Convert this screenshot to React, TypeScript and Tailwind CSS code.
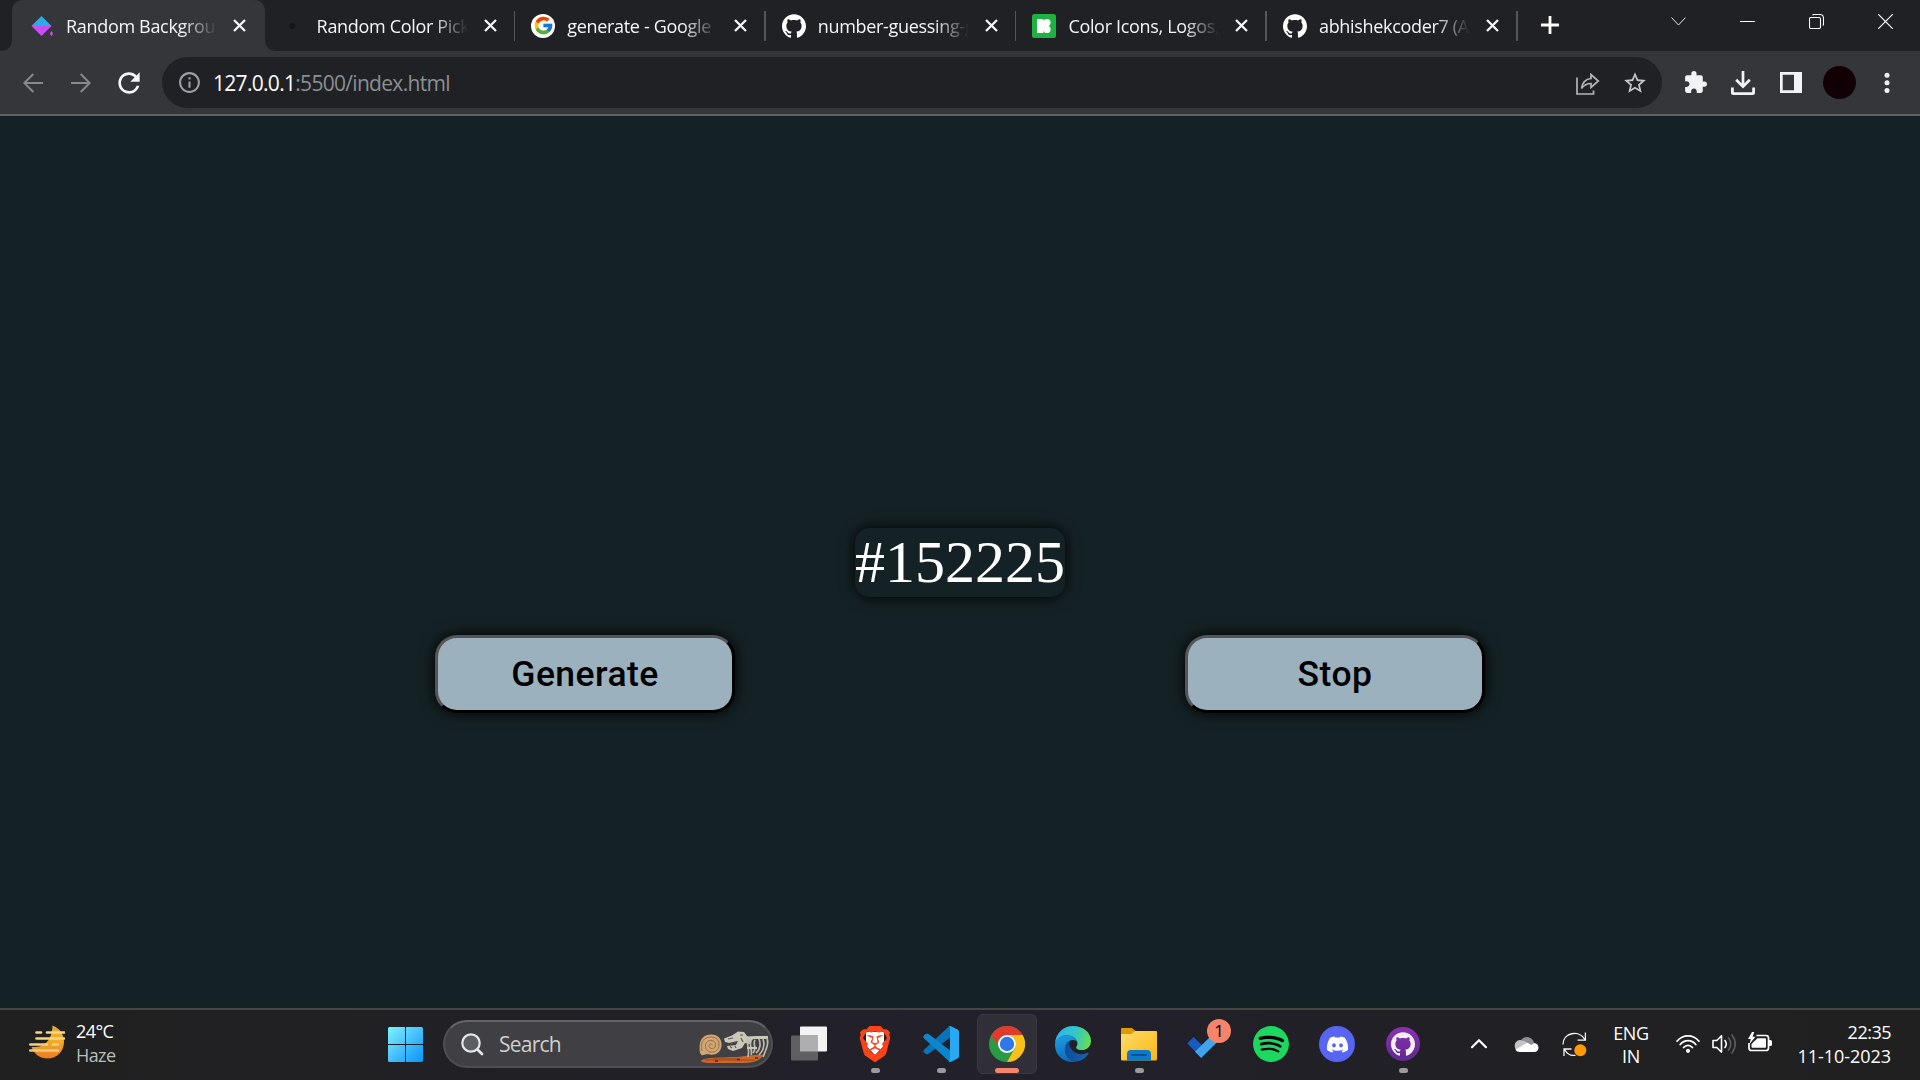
import React from "react";
import { FcGoogle } from "react-icons/fc";
import { FaDiscord } from "react-icons/fa";
import { SiBrave, SiGithub, SiSpotify } from "react-icons/si";
import { MdExtension, MdInfoOutline, MdRefresh, MdStarBorder } from "react-icons/md";

const uiFont = "font-['Open_Sans','Noto_Sans',sans-serif]";

function DropIcon() {
  return (
    <svg width="24" height="24" viewBox="0 0 24 24">
      <path d="M11.5 2 L21.5 12 H1.5 Z" fill="#27aee8" />
      <path d="M1.5 12 H21.5 L11.5 22 Z" fill="#c94df0" />
      <path d="M21.5 17.5 q2 2.4 0 4 q-2 -1.6 0 -4" fill="#c94df0" stroke="#c94df0" />
    </svg>
  );
}

function DotIcon() {
  return (
    <svg width="24" height="24" viewBox="0 0 24 24">
      <circle cx="11.5" cy="12" r="3" fill="#151617" />
    </svg>
  );
}

function GoogleIcon() {
  return (
    <span className="flex size-6 items-center justify-center rounded-full bg-white">
      <FcGoogle size={21} />
    </span>
  );
}

function Icons8Icon() {
  return (
    <svg width="24" height="24" viewBox="0 0 24 24">
      <rect width="24" height="24" rx="2.5" fill="#1fb141" />
      <rect x="5" y="5" width="6.6" height="14" rx="0.8" fill="#fff" />
      <rect x="11" y="7" width="4" height="10" fill="#fff" />
      <circle cx="15" cy="8.6" r="3.6" fill="#fff" />
      <circle cx="15" cy="15.4" r="3.6" fill="#fff" />
    </svg>
  );
}

function CloseIcon() {
  return (
    <svg width="13" height="13" viewBox="0 0 13 13">
      <path d="M1 1 L12 12 M12 1 L1 12" stroke="#f4f5f6" strokeWidth="2.3" />
    </svg>
  );
}

const tabs: { title: string; icon: React.ReactNode }[] = [
  { title: "Random Backgroun", icon: <DropIcon /> },
  { title: "Random Color Pick", icon: <DotIcon /> },
  { title: "generate - Google", icon: <GoogleIcon /> },
  { title: "number-guessing-g", icon: <SiGithub size={24} color="#fff" /> },
  { title: "Color Icons, Logos,", icon: <Icons8Icon /> },
  { title: "abhishekcoder7 (A", icon: <SiGithub size={24} color="#fff" /> },
];

function Tab({ index }: { index: number }) {
  const tab = tabs[index];
  const active = index === 0;
  return (
    <div className="relative h-[51px] w-[250.6px] shrink-0">
      {active && (
        <svg className="absolute -left-[14px] top-0" width="294" height="51" viewBox="0 0 294 51">
          <path
            d="M0 51 Q12 51 12 39 V12 Q12 0 24 0 H253 Q265 0 265 12 V39 Q265 51 277 51 Z"
            fill="#35363a"
          />
        </svg>
      )}
      <div className="relative flex h-[51px] items-center pl-4">
        <span className="flex size-6 shrink-0 items-center justify-center">{tab.icon}</span>
        <span className="ml-3 w-[152px] shrink-0 overflow-hidden whitespace-nowrap text-[18px] leading-6 tracking-[-0.32px] text-[#f4f5f6] [mask-image:linear-gradient(to_right,black_116px,transparent_151px)]">
          {tab.title}
        </span>
        <span className="ml-[15px] flex">
          <CloseIcon />
        </span>
      </div>
      {!active && <div className="absolute right-0 top-[11px] h-[30px] w-[1.5px] bg-[#54565a]" />}
    </div>
  );
}

function TabStrip() {
  return (
    <div className="flex h-[51px] bg-[#202124] pl-[14px]">
      {tabs.map((t, i) => (
        <Tab key={t.title} index={i} />
      ))}
      <svg className="ml-[23px] mt-4" width="18" height="18" viewBox="0 0 18 18">
        <path d="M9 0.5 V17.5 M0.5 9 H17.5" stroke="#fff" strokeWidth="2.8" strokeLinecap="round" />
      </svg>
      <div className="ml-auto mr-[27px] flex items-start gap-[54px] pt-[14px]">
        <svg width="15" height="15" viewBox="0 0 15 15">
          <path d="M0.5 3.5 L7.5 11 L14.5 3.5" stroke="#e8e8e8" fill="none" />
        </svg>
        <svg width="15" height="15" viewBox="0 0 15 15">
          <path d="M0 7.5 H15" stroke="#fff" />
        </svg>
        <svg width="15" height="15" viewBox="0 0 15 15" fill="none" stroke="#fff" strokeWidth="1.1">
          <rect x="0.5" y="3.5" width="11" height="11" rx="1.5" />
          <path d="M3.5 1.2 Q4 0.5 5 0.5 H11 Q14.5 0.5 14.5 4 V10 Q14.5 11 13.8 11.5" />
        </svg>
        <svg width="15" height="15" viewBox="0 0 15 15">
          <path d="M0.3 0.3 L14.7 14.7 M14.7 0.3 L0.3 14.7" stroke="#fff" strokeWidth="1.2" />
        </svg>
      </div>
    </div>
  );
}

function Toolbar() {
  return (
    <div className="flex h-[65px] items-center border-b-2 border-[#5f6164] bg-[#35363a] pl-[23px]">
      <svg width="20" height="20" viewBox="0 0 20 20" fill="none" stroke="#87888b" strokeWidth="2">
        <path d="M20 10 H1.5 M10.3 1 L1.3 10 L10.3 19" />
      </svg>
      <svg className="ml-7" width="20" height="20" viewBox="0 0 20 20" fill="none" stroke="#87888b" strokeWidth="2">
        <path d="M0 10 H18.5 M9.7 1 L18.7 10 L9.7 19" />
      </svg>
      <MdRefresh className="ml-[22px] shrink-0" size={32} color="#f4f5f7" />
      <div className="ml-[17px] flex h-[51px] w-[1500px] items-center rounded-full bg-[#202124] pl-[15px]">
        <MdInfoOutline size={25} color="#9aa0a6" className="shrink-0" />
        <span className="ml-[11px] text-[21px] leading-7 tracking-[-0.7px] text-[#8c8f93]">
          <span className="text-white">127.0.0.1</span>:5500/index.html
        </span>
        <svg className="ml-auto mt-0.5" width="24" height="22" viewBox="0 0 24 22" fill="none" stroke="#b3b5b8" strokeWidth="1.7">
          <path d="M1 4.5 V21 H17.5 V17.5" />
          <path d="M5.5 15.5 C6.5 9 9.5 6 15 5.5 V1.5 L22.3 8 L15 14.3 V10.5 C10.5 10.5 8 12 5.5 15.5 Z" />
        </svg>
        <MdStarBorder className="ml-[22px] mr-[14px] shrink-0" size={26} color="#c4c6c9" />
      </div>
      <MdExtension className="ml-[21px] shrink-0" size={25} color="#f1f3f4" />
      <svg className="ml-[23px] shrink-0" width="24" height="24" viewBox="0 0 24 24" fill="none" stroke="#f1f3f4">
        <path d="M12 0 V15.5 M5.2 8.8 L12 15.6 L18.8 8.8" strokeWidth="2.7" />
        <path d="M1.4 16.5 V21.5 Q1.4 22.6 2.5 22.6 H21.5 Q22.6 22.6 22.6 21.5 V16.5" strokeWidth="2.8" />
      </svg>
      <svg className="ml-[25px] shrink-0" width="22" height="21" viewBox="0 0 22 21">
        <path d="M0 0 H22 V21 H0 Z M2.7 2.7 V18.3 H14 V2.7 Z" fill="#f1f3f4" fillRule="evenodd" />
      </svg>
      <div className="ml-[21px] size-[33px] shrink-0 rounded-full bg-[#100005]" />
      <svg className="ml-7 shrink-0" width="6" height="22" viewBox="0 0 6 22" fill="#f1f3f4">
        <circle cx="3" cy="3.2" r="2.5" />
        <circle cx="3" cy="10.8" r="2.5" />
        <circle cx="3" cy="18.4" r="2.5" />
      </svg>
    </div>
  );
}

function ActionButton({ label }: { label: string }) {
  return (
    <button className="flex h-[78px] w-[300px] items-center justify-center rounded-[22px] border-[3px] border-b-black border-l-[#555] border-r-black border-t-[#555] bg-[#9cb1be] pt-0.5 font-['Roboto',sans-serif] text-[35.5px] font-medium leading-none tracking-[0.45px] text-black shadow-[0_0_15px_black]">
      {label}
    </button>
  );
}

function PageContent() {
  return (
    <main className="flex h-[892px] flex-col items-center bg-[#152225] pt-[412px]">
      <p className="h-[69px] w-[210px] rounded-[15px] font-['Liberation_Serif',serif] text-[60px] leading-[69px] text-white shadow-[0_0_15px_black]">
        #152225
      </p>
      <div className="mt-[38px] flex gap-[450px]">
        <ActionButton label="Generate" />
        <ActionButton label="Stop" />
      </div>
    </main>
  );
}

function WeatherIcon() {
  return (
    <svg width="36" height="36" viewBox="0 0 36 36">
      <defs>
        <linearGradient id="moon" x1="0" y1="0" x2="0" y2="1">
          <stop offset="0" stopColor="#e0a63a" />
          <stop offset="0.45" stopColor="#f3ae2b" />
          <stop offset="1" stopColor="#ef7b1c" />
        </linearGradient>
      </defs>
      <path d="M23.5 0.5 C31 3 35 10 35 17 C35 26 28 33.5 18.5 33.5 C11 33.5 5 29 2.5 22 C14 23 23 17 23.5 0.5 Z" fill="url(#moon)" />
      <g strokeLinecap="round" strokeWidth="2.6">
        <path d="M7.5 7.5 H12 M18 7.5 H35 M7.5 13.5 H35" stroke="#f8d878" />
        <path d="M1.3 19.5 H18 M24 19.5 H29" stroke="#f3cf84" />
        <path d="M1.3 25.5 H29" stroke="#e9c98a" />
      </g>
    </svg>
  );
}

function StartIcon() {
  return (
    <svg width="35" height="35" viewBox="0 0 35 35">
      <defs>
        <linearGradient id="start" gradientUnits="userSpaceOnUse" x1="0" y1="0" x2="35" y2="35">
          <stop offset="0" stopColor="#7bf3ff" />
          <stop offset="0.5" stopColor="#48c1fb" />
          <stop offset="1" stopColor="#0794fb" />
        </linearGradient>
      </defs>
      <path d="M1.5 0 H17 V17 H0 V1.5 Q0 0 1.5 0 Z M18 0 H33.5 Q35 0 35 1.5 V17 H18 Z M0 18 H17 V35 H1.5 Q0 35 0 33.5 Z M18 18 H35 V33.5 Q35 35 33.5 35 H18 Z" fill="url(#start)" />
    </svg>
  );
}

function FossilArt() {
  return (
    <svg width="70" height="34" viewBox="0 0 70 34" fill="none">
      <path d="M2 30.5 C8 26.5 22 28 32 27 C42 27.5 56 24 64 25 C62 30 55 33 45 33 H12 C5 33 2 32 2 30.5 Z" fill="#c96629" />
      <path d="M6 30 H56 M14 28.8 H40" stroke="#9c4317" strokeWidth="0.8" />
      <path d="M16 31 h3 M38 29.5 h3 M56 28 h3" stroke="#5c2408" strokeWidth="1.5" />
      <path d="M1 23 C-1 10 4 4.5 12 4.5 C20 4.5 23 10 22.5 16 C22 22.5 16 25.5 11 24.5 C7 24 5 25 3 25.5 Z" fill="#d0a675" />
      <path d="M3 21 C1 12 5 7 12 7 C18 7 20.5 11 20 15.5 C19.5 20 16 22.5 12 22 C8 21.5 6 18.5 6.5 15 C7 11.5 10 10 13 10.5 C16 11 17 13.5 16.5 16 C16 18 14 19 12 18.5 C10 18 9.5 16 10.5 14.5 C11.5 13.3 13.5 14 13.3 15.5" stroke="#9c7045" strokeWidth="1" />
      <path d="M25 8.5 L33 5.5 L39 1.5 L45 2 L48 6 L54 9 L51 14 L46 13 L43 18 L34 21 L29 19 L28 16 L37 15 L39 11 L30 13 L26 12 Z" fill="#cbc8b7" />
      <path d="M29 9 L34 8 M41 5 h3 M33 12 v2 M36 11.5 v2 M31 16.5 L33 18 M36 16 L37 18 M42 8 L44 12" stroke="#625d51" strokeWidth="1.2" />
      <path d="M47 8.5 C55 6.5 62 8 69 7.5" stroke="#cbc8b7" strokeWidth="3" />
      <path d="M49 9 C47 14 51 17 49 27 M52 10 C50 16 54 22 52 25 M56 10 C53 15 59 18 54 23 M60 9 C62 14 61 20 57 23 M64 9 C66 15 64 21 60 25 M68 8 C70 14 67 20 64 27" stroke="#bdbaa9" strokeWidth="1.7" />
      <path d="M48 18 H58" stroke="#ccc9b8" strokeWidth="2.2" />
    </svg>
  );
}

function TaskViewIcon() {
  return (
    <svg width="36" height="36" viewBox="0 0 36 36">
      <rect x="9" y="0.5" width="27" height="25" rx="1" fill="#f3f3f3" />
      <rect x="0" y="9.5" width="27" height="25" rx="1" fill="#606063" />
      <rect x="9" y="9.5" width="18" height="16" fill="#aeaeae" />
    </svg>
  );
}

function BraveIcon() {
  return (
    <span className="relative flex h-9 w-9 items-center justify-center">
      <span className="absolute left-[9px] top-[6px] h-[23px] w-[18px] bg-white [clip-path:polygon(0_0,100%_0,100%_60%,50%_100%,0_60%)]" />
      <SiBrave size={36} color="#fb4218" className="relative" />
    </span>
  );
}

function VSCodeIcon() {
  return (
    <svg width="36" height="36" viewBox="0 0 100 100">
      <path d="M3 34 Q-1 30 3 26.5 L8 22.5 Q11 20 15 22.5 L78 70 V97 L72 98 Z" fill="#0a86cd" />
      <path d="M3 66 Q-1 70 3 73.5 L8 77.5 Q11 80 15 77.5 L78 30 V2 L71 2 Z" fill="#0a74bb" />
      <path d="M3 34 Q-1 30 3 26.5 L8 22.5 Q11 20 15 22.5 L52 51 L36 64 Z" fill="#0f86cc" />
      <path d="M71 1 Q74 -1 78 1 L96 10 Q100 12 100 16 V84 Q100 88 96 90 L78 99 Q74 101 71 98 Q75 98 75 93 V7 Q75 2 71 1 Z" fill="#28a9f3" />
    </svg>
  );
}

function ChromeIcon() {
  return (
    <svg width="36" height="36" viewBox="0 0 48 48">
      <circle cx="24" cy="24" r="24" fill="#2a9b45" />
      <path d="M3.2 12 A24 24 0 0 1 44.8 12 H24 A12 12 0 0 0 13.6 30 Z" fill="#e13b2e" />
      <path d="M44.8 12 A24 24 0 0 1 24 48 L34.4 30 A12 12 0 0 0 24 12 Z" fill="#fbc116" />
      <circle cx="24" cy="24" r="12" fill="#fff" />
      <circle cx="24" cy="24" r="9.6" fill="#2f78ec" />
    </svg>
  );
}

function EdgeIcon() {
  return (
    <svg width="36" height="36" viewBox="0 0 256 256">
      <defs>
        <linearGradient id="edgeTop" x1="0" y1="0.3" x2="1" y2="0.5">
          <stop offset="0" stopColor="#2fb4ee" />
          <stop offset="0.55" stopColor="#32c7c6" />
          <stop offset="1" stopColor="#66dd52" />
        </linearGradient>
        <linearGradient id="edgeMid" x1="0.2" y1="0" x2="0.5" y2="1">
          <stop offset="0" stopColor="#1b9fe0" />
          <stop offset="1" stopColor="#0f68bd" />
        </linearGradient>
        <linearGradient id="edgeLow" x1="0" y1="0" x2="1" y2="0">
          <stop offset="0" stopColor="#0f4d96" />
          <stop offset="1" stopColor="#1363b0" />
        </linearGradient>
      </defs>
      <path d="M0 124 C4 52 60 0 128 0 C202 0 256 48 256 106 C256 146 226 171 190 171 C166 171 150 162 150 152 C150 145 160 141 160 124 C160 92 126 68 84 68 C46 68 14 86 0 124 Z" fill="url(#edgeTop)" />
      <path d="M0 128 C8 86 44 66 82 66 C128 66 160 94 160 124 C160 112 146 100 128 100 C94 100 72 132 72 166 C72 212 104 246 146 254 C60 266 -4 204 0 128 Z" fill="url(#edgeMid)" />
      <path d="M100 110 C66 128 60 178 86 216 C102 240 122 252 144 255 C184 252 220 230 238 198 C242 192 237 188 231 191 C172 218 98 184 100 110 Z" fill="url(#edgeLow)" />
    </svg>
  );
}

function ExplorerIcon() {
  return (
    <svg width="36" height="36" viewBox="0 0 36 36">
      <defs>
        <linearGradient id="folder" x1="0" y1="0" x2="1" y2="1">
          <stop offset="0" stopColor="#ffdc70" />
          <stop offset="1" stopColor="#fbb70c" />
        </linearGradient>
      </defs>
      <path d="M0 9 V3 Q0 2 1 2 H11 L15 5.5 V9 Z" fill="#dd9c05" />
      <path d="M0 8 H10.5 L14 5 H35 Q36 5 36 6 V33 Q36 34.5 34.5 34.5 H1.5 Q0 34.5 0 33 Z" fill="url(#folder)" />
      <path d="M6 34.5 V28 Q6 24 10 24 H26 Q30 24 30 28 V34.5 Z" fill="#0c79cd" />
      <path d="M11 29 H25" stroke="#084f91" strokeWidth="1.8" strokeLinecap="round" />
    </svg>
  );
}

function TodoIcon() {
  return (
    <span className="relative size-9">
      <svg width="36" height="36" viewBox="0 0 36 36">
        <path d="M0.3 17.4 L6.5 11 L18.5 22.8 L12.2 29.5 Z" fill="#185abd" />
        <path d="M8 25.8 L31 3 L36.5 9.8 L14.2 32 Z" fill="#41a5ee" />
      </svg>
      <span className="absolute -top-[7px] left-5 flex size-6 items-center justify-center rounded-full bg-[#f5846b] text-[17px] leading-6 text-black">
        1
      </span>
    </span>
  );
}

function SpotifyIcon() {
  return (
    <span className="flex size-9 items-center justify-center rounded-full bg-black">
      <SiSpotify size={36} color="#1ed760" />
    </span>
  );
}

function DiscordIcon() {
  return (
    <span className="flex size-9 items-center justify-center rounded-full bg-[#5865f2]">
      <FaDiscord size={23} color="#fff" />
    </span>
  );
}

function GithubDesktopIcon() {
  return (
    <span className="flex size-[34px] items-center justify-center rounded-full bg-linear-to-b from-[#8f2fb5] to-[#5b2a8c]">
      <SiGithub size={24} color="#f3eef8" />
    </span>
  );
}

const apps: { name: string; icon: React.ReactNode; mark?: "running" | "focused" }[] = [
  { name: "Task view", icon: <TaskViewIcon /> },
  { name: "Brave", icon: <BraveIcon />, mark: "running" },
  { name: "Code", icon: <VSCodeIcon />, mark: "running" },
  { name: "Chrome", icon: <ChromeIcon />, mark: "focused" },
  { name: "Edge", icon: <EdgeIcon /> },
  { name: "Explorer", icon: <ExplorerIcon />, mark: "running" },
  { name: "To Do", icon: <TodoIcon /> },
  { name: "Spotify", icon: <SpotifyIcon /> },
  { name: "Discord", icon: <DiscordIcon /> },
  { name: "GitHub Desktop", icon: <GithubDesktopIcon />, mark: "running" },
];

function AppCell({ icon, mark }: { icon: React.ReactNode; mark?: "running" | "focused" }) {
  return (
    <div
      className={
        mark === "focused"
          ? "relative mx-[3px] flex size-[60px] shrink-0 items-center justify-center rounded-md border border-[#3a3942] bg-[#302f38]"
          : "relative mx-[3px] flex size-[60px] shrink-0 items-center justify-center"
      }
    >
      {icon}
      {mark === "running" && <div className="absolute bottom-px left-[26px] h-[5px] w-[9px] rounded-full bg-[#9b9a9f]" />}
      {mark === "focused" && <div className="absolute bottom-0 left-[17px] h-[5px] w-6 rounded-full bg-[#f5846b]" />}
    </div>
  );
}

function Tray() {
  return (
    <div className="ml-auto flex h-[68px] items-center">
      <svg className="-mt-px" width="18" height="11" viewBox="0 0 18 11">
        <path d="M2 9.2 L9 2.2 L16 9.2" stroke="#fff" strokeWidth="2.2" fill="none" strokeLinecap="round" strokeLinejoin="round" />
      </svg>
      <svg className="ml-[26px]" width="25" height="24" viewBox="0 0 25 24">
        <path d="M6 11 A7 7 0 0 1 19 9 L14 14 Z" fill="#8f8f8f" />
        <path d="M1 16 C-1 8 8 6 12 10 L19 14 L8 19 H4 Q1.5 18.5 1 16 Z" fill="#c4c4c4" />
        <path d="M12 11.5 C14 8.5 18 8.5 20 11 C26 11.5 26 20 20 20 H5.5 Q2.5 20 1.5 17.5 Z" fill="#fff" />
        <path d="M6.5 9 Q9 7.5 12 10 L17.5 13 L20.2 11 A7.5 7.5 0 0 0 6.5 9 Z" fill="#8f8f8f" />
      </svg>
      <svg className="ml-[23px]" width="25" height="25" viewBox="0 0 25 25" fill="none" stroke="#f5f5f5" strokeWidth="1.3">
        <path d="M1 12.5 C1 0.5 17 -2.5 22.8 7.5 M23.4 0.5 V8.2 H15.5" />
        <path d="M2 24 V17 H9.5 M2.8 17.8 C5 22 9 24 13.5 23.3" />
        <circle cx="18.3" cy="18.3" r="6" fill="#ff9a00" stroke="none" />
      </svg>
      <div className="ml-[26px] mt-px w-9 text-center text-[18px] leading-[23px] tracking-[-0.4px] text-white">
        ENG
        <br />
        IN
      </div>
      <svg className="ml-[27px]" width="24" height="20" viewBox="0 0 24 20" fill="none" stroke="#fff" strokeWidth="1.7" strokeLinecap="round">
        <path d="M1 7.2 C7 0 17 0 23 7.2 M4.2 10.5 C8.5 5.4 15.5 5.4 19.8 10.5 M7.6 13.6 C10 10.5 14 10.5 16.4 13.6" />
        <circle cx="12" cy="16.8" r="2.1" fill="#fff" stroke="none" />
      </svg>
      <svg className="ml-3" width="24" height="22" viewBox="0 0 24 22" fill="none" stroke="#fff" strokeWidth="1.6" strokeLinecap="round" strokeLinejoin="round">
        <path d="M1 7.5 H4.8 L9.5 2.7 V19.3 L4.8 14.5 H1 Z" />
        <path d="M13 7.5 Q15.5 11 13 14.5" />
        <path d="M16.5 4.8 Q21 11 16.5 17.2 M20 2 Q26.5 11 20 20" stroke="#5d5d5d" />
      </svg>
      <svg className="-mt-1 ml-3" width="24" height="20" viewBox="0 0 24 20">
        <path d="M8.5 3.5 H18 Q20.5 3.5 20.5 6 V16 Q20.5 18.5 18 18.5 H3.5 Q1 18.5 1 16 V11" fill="none" stroke="#fff" strokeWidth="1.7" />
        <path d="M9.5 6.2 H17 Q18 6.2 18 7.2 V14.8 Q18 15.8 17 15.8 H4.5 Q3.5 15.8 3.5 14.8 V12 Z" fill="#fff" />
        <path d="M21 8 H22.4 Q24 8 24 9.6 V12.4 Q24 14 22.4 14 H21 Z" fill="#fff" />
        <path d="M4 0 L0 7 H2.8 L1.5 12 L7.5 4.8 H4.6 L6.2 0 Z" fill="#fff" />
      </svg>
      <div className="ml-[18px] w-[101px] whitespace-nowrap text-right text-[18px] leading-6 tracking-[-0.5px] text-white">
        22:35
        <br />
        <span className="tracking-[-0.05px]">11-10-2023</span>
      </div>
    </div>
  );
}

function Taskbar() {
  return (
    <footer className="flex h-[72px] items-start border-t-2 border-[#454545] bg-linear-to-r from-[#202020] via-[#22202a] via-[52%] to-[#202020] pl-[29px] pr-[29px]">
      <div className="mt-[9px] flex h-12 w-[359px] shrink-0 items-center">
        <WeatherIcon />
        <div className="ml-[11px] text-[18px] leading-6 tracking-[-0.6px] text-white">
          24°C
          <br />
          <span className="text-[#bcbcbc]">Haze</span>
        </div>
      </div>
      <div className="mt-[17px] shrink-0">
        <StartIcon />
      </div>
      <div className="ml-5 mt-[10px] flex h-12 w-[330px] shrink-0 items-center rounded-full border-2 border-[#4f4e52] border-t-[#646367] bg-[#403f43] pl-4">
        <svg width="23" height="23" viewBox="0 0 23 23" fill="none" stroke="#e4e7ea" strokeLinecap="round">
          <circle cx="10" cy="10" r="8.7" strokeWidth="2.2" fill="#5c5d62" />
          <path d="M16.5 16.5 L21 21" strokeWidth="2.8" />
        </svg>
        <span className="ml-[15px] text-[21px] leading-7 tracking-[-0.75px] text-[#cfcfcf]">Search</span>
        <div className="ml-auto mr-0.5 mt-[5px] shrink-0">
          <FossilArt />
        </div>
      </div>
      <div className="ml-[3px] mt-1 flex">
        {apps.map((app) => (
          <AppCell key={app.name} icon={app.icon} mark={app.mark} />
        ))}
      </div>
      <Tray />
    </footer>
  );
}

export default function App() {
  return (
    <div className={`flex h-[1080px] w-[1920px] flex-col overflow-hidden ${uiFont}`}>
      <TabStrip />
      <Toolbar />
      <PageContent />
      <Taskbar />
    </div>
  );
}
